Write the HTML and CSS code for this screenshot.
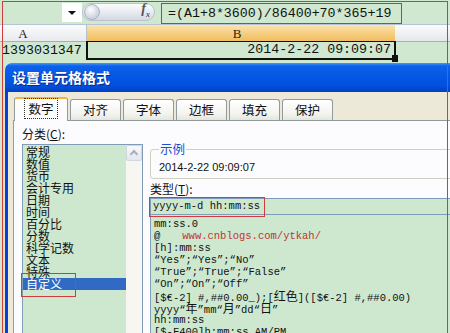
FILE: index.html
```html
<!DOCTYPE html>
<html lang="zh-CN">
<head>
    <meta charset="UTF-8">
    <title>设置单元格格式</title>
    <link rel="stylesheet" href="styles.css">
</head>
<body>
    <div class="screen">
        <div class="formula-bar">
            <div class="name-box"></div>
            <div class="name-drop"><span class="arrow"></span></div>
            <div class="fx-pill"><span class="knob"></span><span class="fx">f<sub>x</sub></span></div>
            <div class="formula">=(A1+8*3600)/86400+70*365+19</div>
        </div>

        <div class="col-headers">
            <div class="col col-a">A</div>
            <div class="col col-b">B</div>
            <div class="col col-rest"></div>
        </div>

        <div class="cells">
            <div class="cell cell-a">1393031347</div>
            <div class="cell cell-b">2014-2-22 09:09:07<span class="handle"></span></div>
        </div>

        <div class="dialog">
            <div class="titlebar">设置单元格格式</div>
            <div class="dialog-body">
                <div class="tabs">
                    <div class="tab active"><span>数字</span></div>
                    <div class="tab"><span>对齐</span></div>
                    <div class="tab"><span>字体</span></div>
                    <div class="tab"><span>边框</span></div>
                    <div class="tab"><span>填充</span></div>
                    <div class="tab"><span>保护</span></div>
                </div>
                <div class="panel">
                    <div class="cat-col">
                        <div class="label">分类(<u>C</u>):</div>
                        <div class="cat-list">
                            <ul class="items">
                                <li>常规</li>
                                <li>数值</li>
                                <li>货币</li>
                                <li>会计专用</li>
                                <li>日期</li>
                                <li>时间</li>
                                <li>百分比</li>
                                <li>分数</li>
                                <li>科学记数</li>
                                <li>文本</li>
                                <li>特殊</li>
                                <li class="selected">自定义</li>
                            </ul>
                            <div class="scroll"><div class="scroll-up"></div></div>
                            <div class="mark mark-custom"></div>
                        </div>
                    </div>
                    <div class="fmt-col">
                        <fieldset class="sample">
                            <legend>示例</legend>
                            <div class="sample-text">2014-2-22 09:09:07</div>
                        </fieldset>
                        <div class="label">类型(<u>T</u>):</div>
                        <div class="type-input">yyyy-m-d hh:mm:ss<div class="mark mark-type"></div></div>
                        <div class="fmt-list">
                            <div>mm:ss.0</div>
                            <div>@<span class="watermark">www.cnblogs.com/ytkah/</span></div>
                            <div>[h]:mm:ss</div>
                            <div>“Yes”;“Yes”;“No”</div>
                            <div>“True”;“True”;“False”</div>
                            <div>“On”;“On”;“Off”</div>
                            <div>[$€-2] #,##0.00_);[<span class="cjk">红色</span>]([$€-2] #,##0.00)</div>
                            <div>yyyy“<span class="cjk">年</span>”mm“<span class="cjk">月</span>”dd“<span class="cjk">日</span>”</div>
                            <div>hh:mm:ss</div>
                            <div>[$-F400]h:mm:ss AM/PM</div>
                        </div>
                    </div>
                </div>
            </div>
        </div>

        <div class="frame-mark"></div>
    </div>
</body>
</html>
```

FILE: styles.css
```css
body {
    margin: 0;
    background-color: #ffffff;
}
.screen {
    position: relative;
    width: 450px;
    height: 333px;
    overflow: hidden;
    background-color: #cfe8cf;
    font-family: "Noto Sans CJK SC", sans-serif;
}

/* formula bar */
.formula-bar {
    display: flex;
    align-items: flex-start;
    height: 24px;
    box-sizing: border-box;
    padding-top: 3px;
}
.name-box {
    width: 62px;
    height: 19px;
}
.name-drop {
    width: 20px;
    height: 19px;
    background-color: #ffffff;
    display: flex;
    align-items: center;
    justify-content: center;
}
.arrow {
    width: 0;
    height: 0;
    border-left: 4px solid transparent;
    border-right: 4px solid transparent;
    border-top: 4px solid #111111;
}
.fx-pill {
    display: flex;
    align-items: center;
    justify-content: space-between;
    width: 73px;
    height: 18px;
    box-sizing: border-box;
    padding-right: 4px;
    border: 1px solid #b9c2cf;
    border-radius: 9px;
    background: linear-gradient(#fbfcfd, #e6eaf0 55%, #d3d9e2);
}
.knob {
    width: 14px;
    height: 14px;
    margin-left: 1px;
    border-radius: 50%;
    border: 1px solid #a9b3c2;
    background: radial-gradient(circle at 40% 35%, #ffffff, #c9d2de 70%);
}
.fx {
    font-family: "Liberation Serif", serif;
    font-style: italic;
    font-weight: bold;
    font-size: 14px;
    color: #555555;
    line-height: 16px;
}
.fx sub {
    font-size: 8px;
}
.formula {
    margin-left: 6px;
    width: 241px;
    height: 21px;
    box-sizing: border-box;
    border: 1px solid #c8383c;
    padding-left: 6px;
    font-family: "Liberation Mono", monospace;
    font-size: 13.3px;
    line-height: 19px;
    color: #111111;
}

/* sheet */
.col-headers {
    display: flex;
    height: 18px;
    box-sizing: border-box;
    border-top: 1px solid #b5c4d4;
    border-bottom: 1px solid #9eb0c4;
    font-family: "Liberation Serif", serif;
    font-size: 13px;
    line-height: 17px;
    color: #222222;
}
.col {
    box-sizing: border-box;
    text-align: center;
}
.col-a {
    width: 87px;
    padding-right: 40px;
    background: linear-gradient(#fbfbfb, #e8eaee);
    border-right: 1px solid #b5c0cc;
}
.col-b {
    width: 308px;
    padding-right: 8px;
    background: linear-gradient(#fbe4ae, #f6cd7e 55%, #f1bd60);
}
.col-rest {
    flex: 1;
    background: linear-gradient(#fbfbfb, #e4e7ec);
}
.cells {
    display: flex;
    height: 18px;
    font-family: "Liberation Mono", monospace;
    font-size: 13.3px;
    line-height: 18px;
    color: #111111;
}
.cell-a {
    width: 86px;
    padding-left: 2px;
    box-sizing: border-box;
}
.cell-b {
    position: relative;
    width: 310px;
    height: 19px;
    margin-top: -1px;
    box-sizing: border-box;
    border: 2px solid #111111;
    border-top-width: 1px;
    text-align: right;
    padding-right: 3px;
    line-height: 16px;
}
.handle {
    position: absolute;
    right: -4px;
    bottom: -4px;
    width: 6px;
    height: 7px;
    background-color: #111111;
}

/* dialog */
.dialog {
    margin-top: 3px;
    margin-left: 5px;
    width: 470px;
}
.titlebar {
    height: 29px;
    padding-left: 7px;
    border-radius: 7px 7px 0 0;
    background: linear-gradient(#4a97f6 0, #0d61e8 3px, #0558e6 45%, #024fdb 80%, #003fc0 100%);
    color: #ffffff;
    font-weight: bold;
    font-size: 14px;
    line-height: 29px;
    text-shadow: 1px 1px 0 #0a2b8c;
}
.dialog-body {
    height: 260px;
    background-color: #ece9d8;
    border-left: 3px solid #0a3dd0;
    padding: 5px 0 0 5px;
}
.tabs {
    display: flex;
    align-items: flex-end;
    gap: 2px;
    height: 23px;
    padding-left: 1px;
    position: relative;
    z-index: 1;
}
.tab {
    width: 51px;
    height: 21px;
    box-sizing: border-box;
    border: 1px solid #919b9c;
    border-bottom: none;
    border-radius: 3px 3px 0 0;
    background: linear-gradient(#ffffff, #f3f3ef 70%, #e6e5dc);
    font-size: 12.5px;
    line-height: 19px;
    text-align: center;
    color: #111111;
}
.tab.active {
    width: 54px;
    height: 24px;
    margin-bottom: -1px;
    border-top: 2px solid #f5b43c;
    background: #fcfcfe;
    line-height: 20px;
}
.tab.active span {
    outline: 1px dotted #333333;
    padding: 0 3px;
}
.panel {
    display: flex;
    gap: 7px;
    height: 240px;
    box-sizing: border-box;
    padding: 7px 0 0 8px;
    background-color: #fcfcfe;
    border: 1px solid #919b9c;
}
.label {
    font-size: 12px;
    line-height: 12px;
    color: #111111;
}
.label u {
    text-underline-offset: 1px;
}

/* category list */
.cat-col {
    width: 121px;
}
.cat-list {
    position: relative;
    display: flex;
    margin-top: 4px;
    height: 200px;
    border: 1px solid #7f9db9;
}
.items {
    flex: 1;
    margin: 0;
    padding: 1px 0 0 0;
    list-style: none;
    background-color: #cde8cf;
}
.items li {
    padding-left: 3px;
    font-size: 12px;
    line-height: 12px;
    height: 12px;
    color: #111111;
}
.items li.selected {
    background-color: #316ac5;
    color: #ffffff;
}
.scroll {
    width: 16px;
    background-color: #f7f6f1;
}
.scroll-up {
    height: 16px;
    box-sizing: border-box;
    border: 1px solid #d2d6de;
    border-radius: 2px;
    background: linear-gradient(#f8f9fb, #e4e7ee);
    position: relative;
}
.scroll-up::after {
    content: "";
    position: absolute;
    left: 4px;
    top: 5px;
    width: 4px;
    height: 4px;
    border-left: 2px solid #a8b0bc;
    border-top: 2px solid #a8b0bc;
    transform: rotate(45deg);
}
.mark {
    position: absolute;
    border: 1px solid #d23c3c;
}
.mark-custom {
    left: -2px;
    top: 128px;
    width: 53px;
    height: 22px;
}

/* format column */
.fmt-col {
    flex: 1;
    padding-top: 15px;
}
.sample {
    margin: 0;
    padding: 0 6px 5px 8px;
    border: 1px solid #d0d0bf;
    border-radius: 3px;
}
.sample legend {
    padding: 0 1px;
    font-size: 12.5px;
    line-height: 12px;
    color: #1d4fd0;
}
.sample-text {
    padding-top: 6px;
    font-family: "Liberation Sans", sans-serif;
    font-size: 11px;
    line-height: 12px;
    color: #111111;
}
.fmt-col .label {
    margin-top: 4px;
}
.type-input {
    position: relative;
    margin-top: 3px;
    height: 17px;
    box-sizing: border-box;
    border: 1px solid #7f9db9;
    background-color: #cde8cf;
    padding-left: 2px;
    font-family: "Liberation Mono", monospace;
    font-size: 10.5px;
    line-height: 15px;
    color: #111111;
}
.mark-type {
    left: -2px;
    top: -2px;
    width: 114px;
    height: 18px;
}
.fmt-list {
    height: 140px;
    box-sizing: border-box;
    border: 1px solid #7f9db9;
    border-top: none;
    background-color: #cde8cf;
    padding: 3px 0 0 3px;
    font-family: "Liberation Mono", monospace;
    font-size: 10.5px;
    line-height: 12px;
    color: #111111;
    white-space: nowrap;
}
.fmt-list div {
    height: 12px;
}
.watermark {
    padding-left: 22px;
    color: #c03434;
}
.cjk {
    font-family: "Noto Sans CJK SC", sans-serif;
    font-size: 12px;
    line-height: 12px;
}

/* red annotation frame around the capture */
.frame-mark {
    position: absolute;
    left: 2px;
    top: 1px;
    width: 446px;
    height: 360px;
    box-sizing: border-box;
    border: 1px solid #d23c3c;
    pointer-events: none;
}
```
